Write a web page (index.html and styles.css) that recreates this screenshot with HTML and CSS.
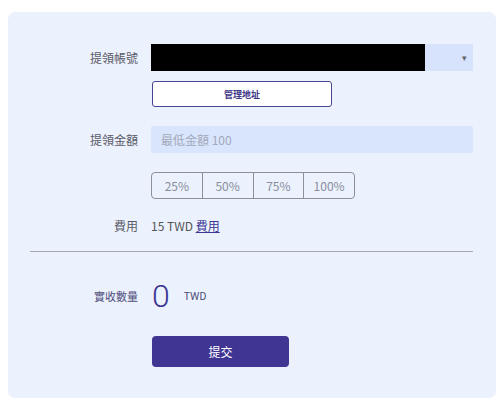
FILE: index.html
```html
<!DOCTYPE html>
<html lang="zh-Hant">
<head>
<meta charset="utf-8">
<link rel="stylesheet" href="styles.css">
</head>
<body>
<div class="card">
  <div class="row row-account">
    <label class="label">提領帳號</label>
    <div class="select">
      <div class="redacted"></div>
      <span class="arrow">▾</span>
    </div>
  </div>
  <div class="row row-manage">
    <span></span>
    <button class="btn-outline">管理地址</button>
  </div>
  <div class="row row-amount">
    <label class="label">提領金額</label>
    <div class="input"><span class="placeholder">最低金額 100</span></div>
  </div>
  <div class="row row-pct">
    <span></span>
    <div class="pct-group">
      <button class="pct">25%</button><button class="pct">50%</button><button class="pct">75%</button><button class="pct">100%</button>
    </div>
  </div>
  <div class="row row-fee">
    <span class="label">費用</span>
    <span class="fee">15 TWD <a class="fee-link">費用</a></span>
  </div>
  <hr class="divider">
  <div class="row row-receive">
    <span class="label label-receive">實收數量</span>
    <div class="receive">
      <span class="amount">0</span>
      <span class="unit">TWD</span>
    </div>
  </div>
  <div class="row row-submit">
    <span></span>
    <button class="btn-submit">提交</button>
  </div>
</div>
</body>
</html>
```
FILE: styles.css
```css
* { box-sizing: border-box; }
html, body { margin: 0; padding: 0; background: #ffffff; }
body {
  padding: 12px 8px 0 8px;
  font-family: "Noto Sans CJK TC", "Noto Sans", sans-serif;
  font-size: 12px;
  color: #555;
}
.card {
  width: 488px;
  height: 386px;
  background: #ebf1fd;
  border-radius: 7px;
  padding: 32px 23px 0 22px;
}
.row {
  display: grid;
  grid-template-columns: 108px 322px;
  column-gap: 13px;
  align-items: center;
}
.label {
  text-align: right;
  color: #5a5a66;
  font-size: 12px;
  line-height: 16px;
}
.select {
  height: 27px;
  background: #d7e3fc;
  display: flex;
  align-items: center;
  justify-content: space-between;
}
.redacted {
  width: 274px;
  height: 27px;
  background: #000;
}
.arrow {
  font-size: 9px;
  color: #666;
  margin-right: 6px;
}
.row-manage { margin-top: 10px; }
.btn-outline {
  width: 180px;
  height: 26px;
  margin-left: 1px;
  border: 1.5px solid #4a4592;
  border-radius: 3px;
  background: #ffffff;
  color: #3d3687;
  font-family: inherit;
  font-weight: 700;
  font-size: 9px;
  padding: 0;
}
.row-amount { margin-top: 19px; }
.input {
  height: 27px;
  background: #d9e5fc;
  border-radius: 2px;
  display: flex;
  align-items: center;
  padding-left: 10px;
}
.placeholder { color: #a3a9bb; font-size: 12px; }
.row-pct { margin-top: 19px; }
.pct-group {
  display: flex;
  width: 204px;
  height: 27px;
  border: 1px solid #8b8f9e;
  border-radius: 4px;
  overflow: hidden;
}
.pct {
  flex: 1;
  border: 0;
  border-left: 1px solid #8b8f9e;
  background: transparent;
  color: #8a8e9c;
  font-family: inherit;
  font-size: 12px;
  padding: 0;
}
.pct:first-child { border-left: 0; }
.row-fee { margin-top: 19px; }
.fee { color: #555; font-size: 12px; line-height: 16px; }
.fee-link { color: #3b3691; text-decoration: underline; }
.divider {
  margin: 17px 0 0 0;
  border: 0;
  border-top: 1px solid #a4a7b5;
  width: 443px;
}
.row-receive { margin-top: 26px; }
.label-receive { color: #4f4d7a; font-size: 11px; }
.receive { display: flex; align-items: center; }
.amount {
  font-family: Roboto, sans-serif;
  font-weight: 300;
  font-size: 32px;
  line-height: 36px;
  color: #3b3691;
  margin-left: 1px;
}
.unit {
  font-family: Roboto, sans-serif;
  font-size: 10.5px;
  color: #4f4d7a;
  margin-left: 14px;
}
.row-submit { margin-top: 22px; }
.btn-submit {
  width: 137px;
  height: 31px;
  margin-left: 1px;
  border: 0;
  border-radius: 4px;
  background: #403593;
  color: #fff;
  font-family: inherit;
  font-size: 12px;
  padding: 0;
}
```
